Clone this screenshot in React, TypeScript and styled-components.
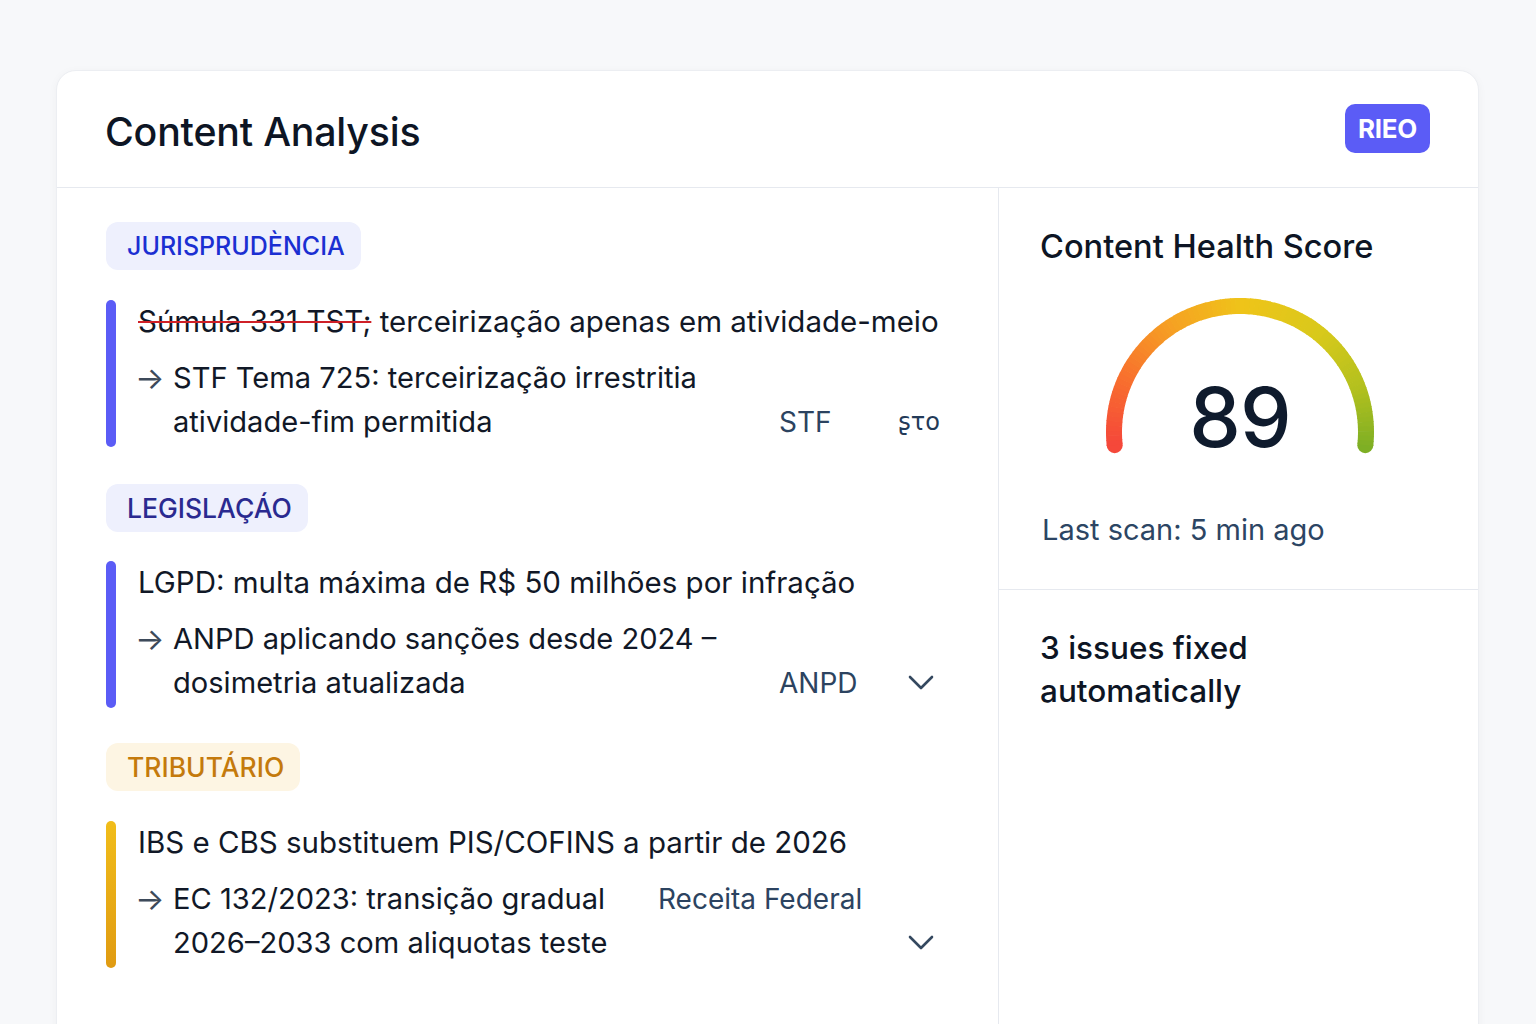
import React from "react";
import styled, { createGlobalStyle } from "styled-components";

const GlobalStyle = createGlobalStyle`
  html, body { margin: 0; padding: 0; background: #f7f8fa; }
  body { font-family: Inter, "Noto Sans", "Liberation Sans", sans-serif; overflow: hidden; }
  * { box-sizing: border-box; }
`;

const Page = styled.div`
  padding: 70px 57px 0 56px;
  height: 1024px;
  overflow: hidden;
`;

const Card = styled.div`
  background: #ffffff;
  border: 1px solid #eceef2;
  border-radius: 20px;
  box-shadow: 0 2px 10px rgba(15, 23, 42, 0.04);
  min-height: 1100px;
  display: flex;
  flex-direction: column;
`;

const Header = styled.header`
  height: 117px;
  display: flex;
  align-items: center;
  justify-content: space-between;
  padding: 0 48px 0 48px;
  border-bottom: 1.5px solid #e6e9ef;
`;

const Title = styled.h1`
  margin: 0;
  font-size: 39.3px;
  font-weight: 500;
  color: #0d1524;
  letter-spacing: -0.2px;
  margin-top: 4px;
`;

const Brand = styled.div`
  background: #5b5cf6;
  color: #fff;
  font-weight: 700;
  font-size: 26px;
  border-radius: 10px;
  height: 49px;
  padding: 0 13px;
  display: flex;
  align-items: center;
  letter-spacing: -0.3px;
  margin-top: -2px;
`;

const Body = styled.div`
  display: grid;
  grid-template-columns: 941px 1fr;
  flex: 1;
`;

const LeftCol = styled.section`
  padding: 34px 58px 0 49px;
  display: flex;
  flex-direction: column;
`;

const RightCol = styled.aside`
  border-left: 1.5px solid #e6e9ef;
  display: flex;
  flex-direction: column;
`;

const Tag = styled.div<{ $bg: string; $fg: string; $fs: number }>`
  align-self: flex-start;
  background: ${(p) => p.$bg};
  color: ${(p) => p.$fg};
  font-size: ${(p) => p.$fs}px;
  font-weight: 500;
  height: 48px;
  padding: 0 16px 0 21px;
  border-radius: 12px;
  display: flex;
  align-items: center;
`;

const Item = styled.div<{ $mt: number; $mb: number }>`
  display: flex;
  gap: 22px;
  margin-top: ${(p) => p.$mt}px;
  margin-bottom: ${(p) => p.$mb}px;
`;

const Bar = styled.div<{ $color: string }>`
  width: 10px;
  flex: none;
  border-radius: 5px;
  background: ${(p) => p.$color};
`;

const ItemBody = styled.div`
  flex: 1;
  display: flex;
  flex-direction: column;
  gap: 14px;
  font-size: 29.5px;
  color: #111827;
`;

const Lead = styled.div`
  line-height: 42px;
  white-space: nowrap;
`;

const Struck = styled.span`
  text-decoration: line-through;
  text-decoration-color: #cf2027;
  text-decoration-thickness: 2px;
`;

const SubRow = styled.div`
  display: flex;
  line-height: 44px;
  margin-bottom: 3px;
  font-size: 29.1px;
`;

const Arrow = styled.span`
  width: 38px;
  flex: none;
  color: #3d4a5a;
  margin-left: -3px;
  font-size: 31px;
`;

const Lines = styled.div<{ $w: number }>`
  width: ${(p) => p.$w}px;
  flex: none;
  white-space: nowrap;
`;

const Source = styled.span<{ $align: "top" | "bottom" }>`
  align-self: ${(p) => (p.$align === "top" ? "flex-start" : "flex-end")};
  color: #2c4360;
  font-size: 28px;
  white-space: nowrap;
`;

const Trailing = styled.span<{ $mr: number }>`
  margin-left: auto;
  margin-right: ${(p) => p.$mr}px;
  align-self: flex-end;
  height: 44px;
  display: flex;
  align-items: center;
  color: #2c4360;
`;

const Glyph = styled.span`
  font-family: "DejaVu Sans", sans-serif;
  font-size: 24px;
  color: #233a58;
`;

const ScoreSection = styled.div`
  padding: 38px 40px 0 41px;
  height: 402px;
  border-bottom: 1.5px solid #e6e9ef;
  display: flex;
  flex-direction: column;
`;

const SideTitle = styled.h2`
  margin: 0;
  font-size: 32.6px;
  font-weight: 500;
  color: #0d1524;
  line-height: 40px;
`;

const GaugeWrap = styled.div`
  position: relative;
  width: 286px;
  height: 170px;
  margin: 32px 0 0 57px;
`;

const ScoreNum = styled.div`
  position: absolute;
  left: 0;
  right: 0;
  top: 75px;
  text-align: center;
  font-size: 82px;
  font-weight: 500;
  color: #0f1b2d;
  letter-spacing: -1px;
  line-height: 90px;
`;

const LastScan = styled.div`
  margin-top: 44px;
  font-size: 29px;
  color: #2c4563;
  padding-left: 2px;
`;

const FixedSection = styled.div`
  padding: 36px 40px 0 41px;
  font-size: 31.5px;
  font-weight: 500;
  line-height: 43px;
  color: #0d1524;
`;

const Chevron = () => (
  <svg width="26" height="16" viewBox="0 0 26 16" fill="none">
    <polyline points="2,2 13,13 24,2" stroke="#34485f" strokeWidth="2.6" strokeLinecap="round" strokeLinejoin="round" />
  </svg>
);

const stops: [number, [number, number, number]][] = [
  [0, [245, 72, 58]],
  [0.15, [248, 110, 46]],
  [0.32, [246, 160, 35]],
  [0.5, [239, 196, 25]],
  [0.7, [216, 201, 27]],
  [0.86, [178, 192, 30]],
  [1, [126, 175, 36]],
];

const colorAt = (t: number) => {
  for (let i = 0; i < stops.length - 1; i++) {
    const [a, ca] = stops[i];
    const [b, cb] = stops[i + 1];
    if (t >= a && t <= b) {
      const k = (t - a) / (b - a);
      const c = ca.map((v, j) => Math.round(v + (cb[j] - v) * k));
      return `rgb(${c[0]},${c[1]},${c[2]})`;
    }
  }
  return "rgb(126,175,36)";
};

const Gauge = () => {
  const cx = 143;
  const cy = 134;
  const r = 126;
  const start = 186;
  const end = -6;
  const n = 90;
  const segs = [];
  const pt = (deg: number) => {
    const rad = (deg * Math.PI) / 180;
    return [cx + r * Math.cos(rad), cy - r * Math.sin(rad)];
  };
  for (let i = 0; i < n; i++) {
    const a0 = start + ((end - start) * i) / n;
    const a1 = start + ((end - start) * (i + 1.15)) / n;
    const [x0, y0] = pt(a0);
    const [x1, y1] = pt(Math.max(a1, end));
    segs.push(
      <path
        key={i}
        d={`M ${x0} ${y0} A ${r} ${r} 0 0 1 ${x1} ${y1}`}
        stroke={colorAt(i / n)}
        strokeWidth="16"
        fill="none"
      />
    );
  }
  const [sx, sy] = pt(start);
  const [ex, ey] = pt(end);
  return (
    <svg width="286" height="170" viewBox="0 0 286 170">
      <circle cx={sx} cy={sy} r="8" fill={colorAt(0)} />
      <circle cx={ex} cy={ey} r="8" fill={colorAt(1)} />
      {segs}
    </svg>
  );
};

export default function App() {
  return (
    <>
      <GlobalStyle />
      <Page>
        <Card>
          <Header>
            <Title>Content Analysis</Title>
            <Brand>RIEO</Brand>
          </Header>
          <Body>
            <LeftCol>
              <Tag $bg="#eef0fd" $fg="#1b2fd2" $fs={25}>JURISPRUDÈNCIA</Tag>
              <Item $mt={30} $mb={37}>
                <Bar $color="#5b5cf6" />
                <ItemBody>
                  <Lead>
                    <Struck>Súmula 331 TST;</Struck> terceirização apenas em atividade-meio
                  </Lead>
                  <SubRow>
                    <Arrow>→</Arrow>
                    <Lines $w={606}>
                      STF Tema 725: terceirização irrestritia
                      <br />
                      atividade-fim permitida
                    </Lines>
                    <Source $align="bottom">STF</Source>
                    <Trailing $mr={0}>
                      <Glyph>ʂτo</Glyph>
                    </Trailing>
                  </SubRow>
                </ItemBody>
              </Item>
              <Tag $bg="#eef0fd" $fg="#2a2a90" $fs={26.5}>LEGISLAÇÁO</Tag>
              <Item $mt={29} $mb={35}>
                <Bar $color="#5b5cf6" />
                <ItemBody>
                  <Lead>LGPD: multa máxima de R$ 50 milhões por infração</Lead>
                  <SubRow>
                    <Arrow>→</Arrow>
                    <Lines $w={606}>
                      ANPD aplicando sanções desde 2024 –
                      <br />
                      dosimetria atualizada
                    </Lines>
                    <Source $align="bottom">ANPD</Source>
                    <Trailing $mr={6}>
                      <Chevron />
                    </Trailing>
                  </SubRow>
                </ItemBody>
              </Item>
              <Tag $bg="#fdf5e3" $fg="#c47a0c" $fs={26.5}>TRIBUTÁRIO</Tag>
              <Item $mt={30} $mb={0}>
                <Bar $color="linear-gradient(180deg, #f1bd1a, #e09b12)" />
                <ItemBody>
                  <Lead>IBS e CBS substituem PIS/COFINS a partir de 2026</Lead>
                  <SubRow>
                    <Arrow>→</Arrow>
                    <Lines $w={485}>
                      EC 132/2023: transição gradual
                      <br />
                      2026–2033 com aliquotas teste
                    </Lines>
                    <Source $align="top">Receita Federal</Source>
                    <Trailing $mr={6}>
                      <Chevron />
                    </Trailing>
                  </SubRow>
                </ItemBody>
              </Item>
            </LeftCol>
            <RightCol>
              <ScoreSection>
                <SideTitle>Content Health Score</SideTitle>
                <GaugeWrap>
                  <Gauge />
                  <ScoreNum>89</ScoreNum>
                </GaugeWrap>
                <LastScan>Last scan: 5 min ago</LastScan>
              </ScoreSection>
              <FixedSection>
                3 issues fixed
                <br />
                automatically
              </FixedSection>
            </RightCol>
          </Body>
        </Card>
      </Page>
    </>
  );
}
